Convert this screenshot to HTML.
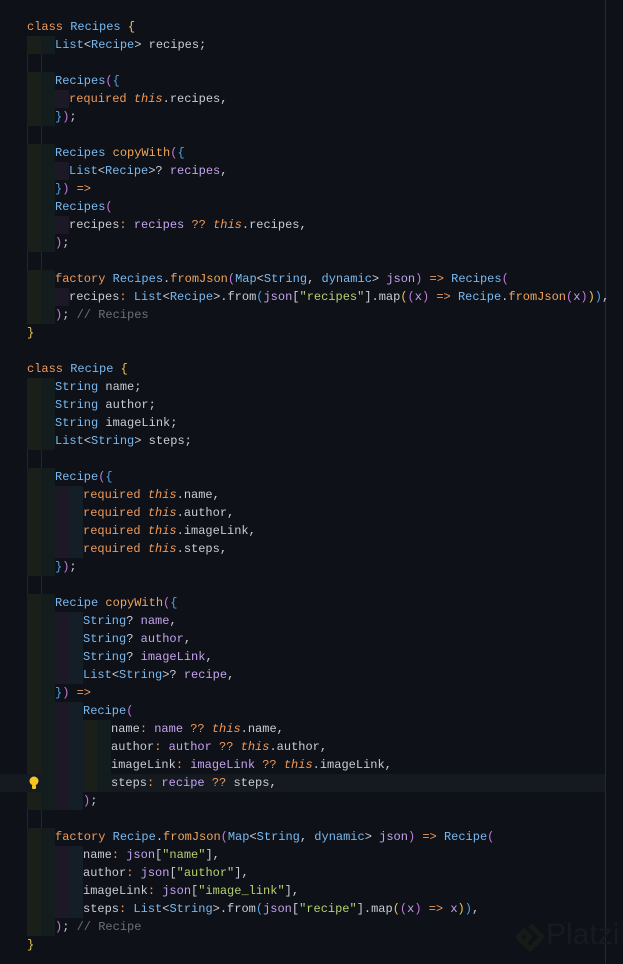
<!DOCTYPE html>
<html><head><meta charset="utf-8"><style>
html,body{margin:0;padding:0;background:#0e1118;width:623px;height:964px;overflow:hidden}
#c{position:absolute;left:27px;top:18px;font-family:"Liberation Mono",monospace;font-size:12px;color:#c9cdd3}
.l{height:18px;line-height:18px;position:relative;white-space:pre}
.g{display:inline-block;width:14px;height:18px;vertical-align:top}
.g1{background:#1a1f19}.g2{background:#141d1d}.g3{background:#1c1825}.g4{background:#141e27}
.k{color:#ef9a5a}.t{color:#79b9ef}.v{color:#c4a2ee}.s{color:#b6d170}.cm{color:#6a707a}
.i{color:#ef9a5a;font-style:italic}.y{color:#f2c744}.p{color:#c678dd}.b{color:#4fa3e8}.f{color:#f0a55a}
.hl{background:#151a21;margin-left:-27px;padding-left:27px;width:578px}
#ruler{position:absolute;left:605px;top:0;width:1px;height:964px;background:#252a31}
.gl{position:absolute;top:36px;width:1px;background:#22272c}
#logo{position:absolute;left:546px;top:918px;color:#171b1f;font-family:"Liberation Sans",sans-serif;font-size:30px}
</style></head><body>
<div id="ruler"></div>
<div class="gl" style="left:27px;height:288px"></div>
<div class="gl" style="left:41px;height:288px"></div>
<div class="gl" style="left:27px;top:378px;height:558px"></div>
<div class="gl" style="left:41px;top:378px;height:558px"></div>
<svg style="position:absolute;left:514px;top:922px" width="32" height="34" viewBox="0 0 32 34"><path d="M16 3 L28 15 L16 27 L10 21 L16 15 L10 9 L4 15 L16 27" fill="none" stroke="#161b17" stroke-width="5" stroke-linejoin="round"/></svg>
<div id="logo">Platzi</div>
<div id="c"><div class="l"><span class="k">class</span> <span class="t">Recipes</span> <span class="y">{</span></div><div class="l"><i class="g g1"></i><i class="g g2"></i><span class="t">List</span>&lt;<span class="t">Recipe</span>&gt; recipes;</div><div class="l"> </div><div class="l"><i class="g g1"></i><i class="g g2"></i><span class="t">Recipes</span><span class="p">(</span><span class="b">{</span></div><div class="l"><i class="g g1"></i><i class="g g2"></i><i class="g g3"></i><span class="k">required</span> <span class="i">this</span>.recipes,</div><div class="l"><i class="g g1"></i><i class="g g2"></i><span class="b">}</span><span class="p">)</span>;</div><div class="l"> </div><div class="l"><i class="g g1"></i><i class="g g2"></i><span class="t">Recipes</span> <span class="f">copyWith</span><span class="p">(</span><span class="b">{</span></div><div class="l"><i class="g g1"></i><i class="g g2"></i><i class="g g3"></i><span class="t">List</span>&lt;<span class="t">Recipe</span>&gt;? <span class="v">recipes</span>,</div><div class="l"><i class="g g1"></i><i class="g g2"></i><span class="b">}</span><span class="p">)</span> <span class="k">=&gt;</span></div><div class="l"><i class="g g1"></i><i class="g g2"></i><span class="t">Recipes</span><span class="p">(</span></div><div class="l"><i class="g g1"></i><i class="g g2"></i><i class="g g3"></i>recipes<span class="k">:</span> <span class="v">recipes</span> <span class="k">??</span> <span class="i">this</span>.recipes,</div><div class="l"><i class="g g1"></i><i class="g g2"></i><span class="p">)</span>;</div><div class="l"> </div><div class="l"><i class="g g1"></i><i class="g g2"></i><span class="k">factory</span> <span class="t">Recipes</span>.<span class="f">fromJson</span><span class="p">(</span><span class="t">Map</span>&lt;<span class="t">String</span>, <span class="t">dynamic</span>&gt; <span class="v">json</span><span class="p">)</span> <span class="k">=&gt;</span> <span class="t">Recipes</span><span class="p">(</span></div><div class="l"><i class="g g1"></i><i class="g g2"></i><i class="g g3"></i>recipes<span class="k">:</span> <span class="t">List</span>&lt;<span class="t">Recipe</span>&gt;.from<span class="b">(</span><span class="v">json</span>[<span class="s">"recipes"</span>].map<span class="y">(</span><span class="p">(</span><span class="v">x</span><span class="p">)</span> <span class="k">=&gt;</span> <span class="t">Recipe</span>.<span class="f">fromJson</span><span class="p">(</span><span class="v">x</span><span class="p">)</span><span class="y">)</span><span class="b">)</span>,</div><div class="l"><i class="g g1"></i><i class="g g2"></i><span class="p">)</span>; <span class="cm">// Recipes</span></div><div class="l"><span class="y">}</span></div><div class="l"> </div><div class="l"><span class="k">class</span> <span class="t">Recipe</span> <span class="y">{</span></div><div class="l"><i class="g g1"></i><i class="g g2"></i><span class="t">String</span> name;</div><div class="l"><i class="g g1"></i><i class="g g2"></i><span class="t">String</span> author;</div><div class="l"><i class="g g1"></i><i class="g g2"></i><span class="t">String</span> imageLink;</div><div class="l"><i class="g g1"></i><i class="g g2"></i><span class="t">List</span>&lt;<span class="t">String</span>&gt; steps;</div><div class="l"> </div><div class="l"><i class="g g1"></i><i class="g g2"></i><span class="t">Recipe</span><span class="p">(</span><span class="b">{</span></div><div class="l"><i class="g g1"></i><i class="g g2"></i><i class="g g3"></i><i class="g g4"></i><span class="k">required</span> <span class="i">this</span>.name,</div><div class="l"><i class="g g1"></i><i class="g g2"></i><i class="g g3"></i><i class="g g4"></i><span class="k">required</span> <span class="i">this</span>.author,</div><div class="l"><i class="g g1"></i><i class="g g2"></i><i class="g g3"></i><i class="g g4"></i><span class="k">required</span> <span class="i">this</span>.imageLink,</div><div class="l"><i class="g g1"></i><i class="g g2"></i><i class="g g3"></i><i class="g g4"></i><span class="k">required</span> <span class="i">this</span>.steps,</div><div class="l"><i class="g g1"></i><i class="g g2"></i><span class="b">}</span><span class="p">)</span>;</div><div class="l"> </div><div class="l"><i class="g g1"></i><i class="g g2"></i><span class="t">Recipe</span> <span class="f">copyWith</span><span class="p">(</span><span class="b">{</span></div><div class="l"><i class="g g1"></i><i class="g g2"></i><i class="g g3"></i><i class="g g4"></i><span class="t">String</span>? <span class="v">name</span>,</div><div class="l"><i class="g g1"></i><i class="g g2"></i><i class="g g3"></i><i class="g g4"></i><span class="t">String</span>? <span class="v">author</span>,</div><div class="l"><i class="g g1"></i><i class="g g2"></i><i class="g g3"></i><i class="g g4"></i><span class="t">String</span>? <span class="v">imageLink</span>,</div><div class="l"><i class="g g1"></i><i class="g g2"></i><i class="g g3"></i><i class="g g4"></i><span class="t">List</span>&lt;<span class="t">String</span>&gt;? <span class="v">recipe</span>,</div><div class="l"><i class="g g1"></i><i class="g g2"></i><span class="b">}</span><span class="p">)</span> <span class="k">=&gt;</span></div><div class="l"><i class="g g1"></i><i class="g g2"></i><i class="g g3"></i><i class="g g4"></i><span class="t">Recipe</span><span class="p">(</span></div><div class="l"><i class="g g1"></i><i class="g g2"></i><i class="g g3"></i><i class="g g4"></i><i class="g g1"></i><i class="g g2"></i>name<span class="k">:</span> <span class="v">name</span> <span class="k">??</span> <span class="i">this</span>.name,</div><div class="l"><i class="g g1"></i><i class="g g2"></i><i class="g g3"></i><i class="g g4"></i><i class="g g1"></i><i class="g g2"></i>author<span class="k">:</span> <span class="v">author</span> <span class="k">??</span> <span class="i">this</span>.author,</div><div class="l"><i class="g g1"></i><i class="g g2"></i><i class="g g3"></i><i class="g g4"></i><i class="g g1"></i><i class="g g2"></i>imageLink<span class="k">:</span> <span class="v">imageLink</span> <span class="k">??</span> <span class="i">this</span>.imageLink,</div><div class="l hl"><span style="position:absolute;left:27px;top:0;width:14px;height:18px;display:flex;align-items:center;justify-content:center"><svg width="10" height="14" viewBox="0 0 10 14"><circle cx="5" cy="5" r="4.5" fill="#f3c623"/><rect x="3" y="9" width="4" height="4" rx="1" fill="#f3c623"/></svg></span><i class="g" style="background:transparent"></i><i class="g g2"></i><i class="g g3"></i><i class="g g4"></i><i class="g g1"></i><i class="g g2"></i>steps<span class="k">:</span> <span class="v">recipe</span> <span class="k">??</span> steps,</div><div class="l"><i class="g g1"></i><i class="g g2"></i><i class="g g3"></i><i class="g g4"></i><span class="p">)</span>;</div><div class="l"> </div><div class="l"><i class="g g1"></i><i class="g g2"></i><span class="k">factory</span> <span class="t">Recipe</span>.<span class="f">fromJson</span><span class="p">(</span><span class="t">Map</span>&lt;<span class="t">String</span>, <span class="t">dynamic</span>&gt; <span class="v">json</span><span class="p">)</span> <span class="k">=&gt;</span> <span class="t">Recipe</span><span class="p">(</span></div><div class="l"><i class="g g1"></i><i class="g g2"></i><i class="g g3"></i><i class="g g4"></i>name<span class="k">:</span> <span class="v">json</span>[<span class="s">"name"</span>],</div><div class="l"><i class="g g1"></i><i class="g g2"></i><i class="g g3"></i><i class="g g4"></i>author<span class="k">:</span> <span class="v">json</span>[<span class="s">"author"</span>],</div><div class="l"><i class="g g1"></i><i class="g g2"></i><i class="g g3"></i><i class="g g4"></i>imageLink<span class="k">:</span> <span class="v">json</span>[<span class="s">"image_link"</span>],</div><div class="l"><i class="g g1"></i><i class="g g2"></i><i class="g g3"></i><i class="g g4"></i>steps<span class="k">:</span> <span class="t">List</span>&lt;<span class="t">String</span>&gt;.from<span class="b">(</span><span class="v">json</span>[<span class="s">"recipe"</span>].map<span class="y">(</span><span class="p">(</span><span class="v">x</span><span class="p">)</span> <span class="k">=&gt;</span> <span class="v">x</span><span class="y">)</span><span class="b">)</span>,</div><div class="l"><i class="g g1"></i><i class="g g2"></i><span class="p">)</span>; <span class="cm">// Recipe</span></div><div class="l"><span class="y">}</span></div></div>
</body></html>
